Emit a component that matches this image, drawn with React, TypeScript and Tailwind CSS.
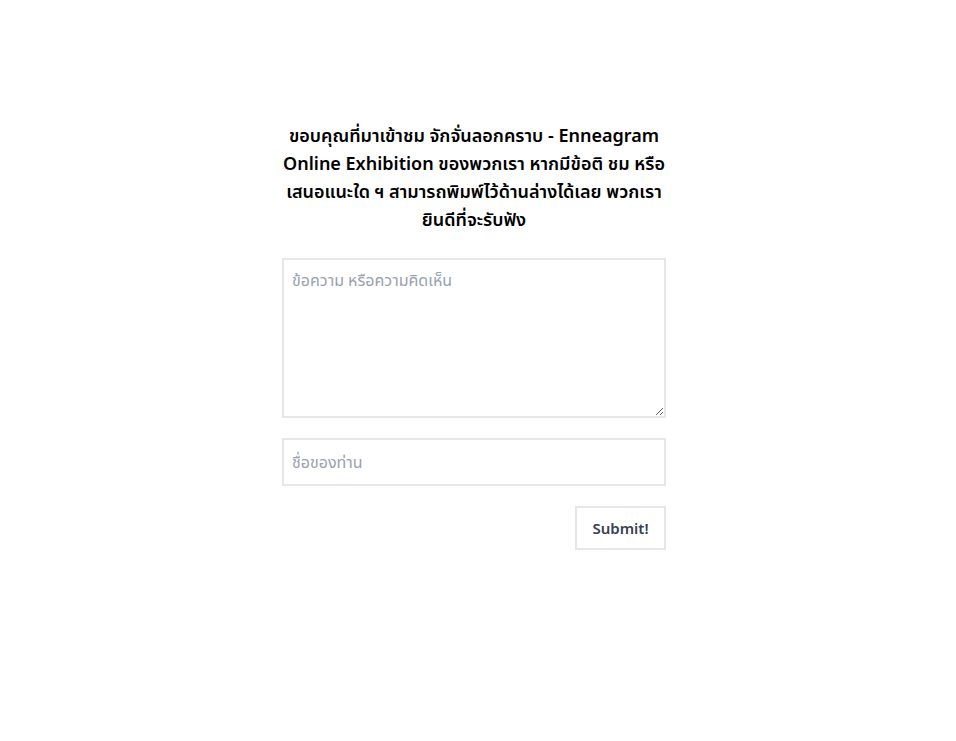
export default function App() {
  return (
    <div
      className="min-h-screen bg-white pt-[121px]"
      style={{ fontFamily: '"Noto Sans", "Noto Sans Thai", sans-serif' }}
    >
      <div className="mx-auto w-[392px] pr-2">
        <h1 className="text-center text-[18px] font-semibold leading-[28px] text-black">
          ขอบคุณที่มาเข้าชม จักจั่นลอกคราบ - Enneagram Online Exhibition ของพวกเรา หากมีข้อติ ชม หรือ
          เสนอแนะใด ฯ สามารถพิมพ์ไว้ด้านล่างได้เลย พวกเรายินดีที่จะรับฟัง
        </h1>

        <form className="mt-[25px] flex flex-col" onSubmit={(e) => e.preventDefault()}>
          <textarea
            placeholder="ข้อความ หรือความคิดเห็น"
            className="h-[160px] w-full border-2 border-gray-200 p-2 text-base text-gray-700 placeholder:text-gray-400 focus:outline-none"
          />
          <input
            placeholder="ชื่อของท่าน"
            className="mt-5 h-12 w-full border-2 border-gray-200 px-2 text-base text-gray-700 placeholder:text-gray-400 focus:outline-none"
          />
          <div className="mt-5 flex justify-end">
            <button
              type="submit"
              className="h-11 w-[91px] border-2 border-gray-200 text-[15px] font-semibold text-gray-700"
            >
              Submit!
            </button>
          </div>
        </form>
      </div>
    </div>
  );
}
